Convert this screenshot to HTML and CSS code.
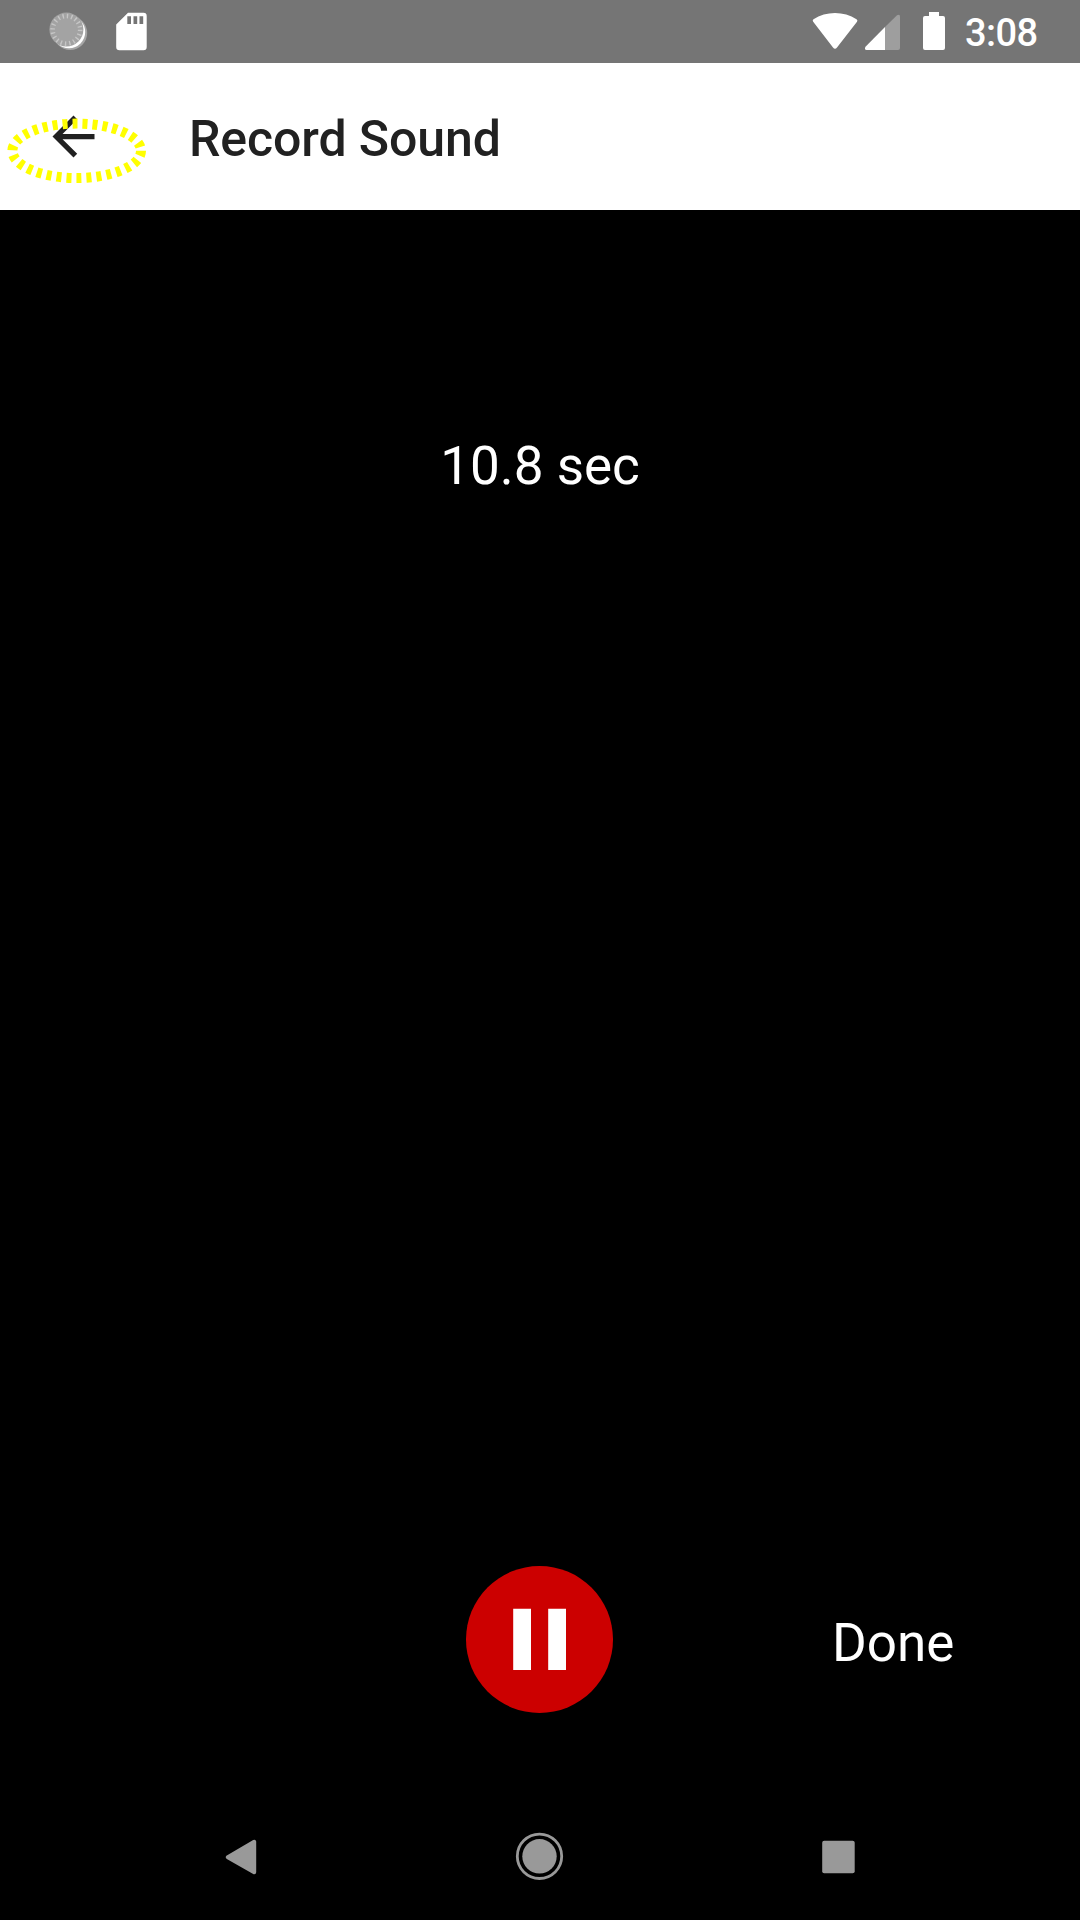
FILE: index.html
```html
<!DOCTYPE html>
<html lang="en">
<head>
<meta charset="utf-8">
<title>Record Sound</title>
<link rel="stylesheet" href="styles.css">
</head>
<body>
<div class="screen">
  <header class="status">
    <svg class="notices" viewBox="0 0 160 63" width="160" height="63">
      <circle cx="70.2" cy="33" r="17" fill="#a6a6a6"/>
      <circle cx="69" cy="32" r="16.2" fill="#fff"/>
      <circle cx="66.4" cy="29.6" r="17" fill="#a3a3a3"/>
      <circle cx="66.4" cy="29.8" r="13.8" fill="none" stroke="#c6c6c6" stroke-width="4.6" stroke-dasharray="1.4 2.935"/>
      <path fill="#fff" fill-rule="evenodd" d="M128 12.7H143.500Q146.700 12.700 146.700 16V47Q146.700 50.300 143.500 50.300H119.500Q116.200 50.300 116.200 47V24.500ZM127.300 16.300V24H131V16.300ZM133.500 16.300V24H137.200V16.300ZM139.500 16.300V24H143.200V16.300Z"/>
    </svg>
    <svg class="signals" viewBox="800 0 150 63" width="150" height="63">
      <path fill="#fff" d="M813 21.500Q812.200 20.300 813.500 19.300C826 10.800 844 10.800 856.500 19.300Q858 20.300 857 21.700L837 47.500Q835 50 833 47.500Z"/>
      <path fill="#9e9e9e" d="M885 27L897 15.300Q900 13.500 900 16.500V48Q900 50 898 50H885Z"/>
      <path fill="#fff" d="M885 27V50H866.500Q864 49.500 865.500 46.700Z"/>
      <path fill="#fff" d="M929 12H939V16H943Q945 16 945 18V48Q945 50 943 50H925Q923 50 923 48V18Q923 16 925 16H929Z"/>
    </svg>
    <span class="clock">3:08</span>
  </header>
  <div class="appbar">
    <svg class="back" viewBox="0 0 24 24" width="63" height="63"><path fill="#212121" d="M20 11H7.830l5.590-5.590L12 4l-8 8 8 8 1.410-1.410L7.830 13H20z"/></svg>
    <h1 class="title">Record Sound</h1>
    <svg class="highlight" viewBox="0 0 160 80" width="160" height="80"><ellipse cx="76.700" cy="40.800" rx="64.300" ry="27.200"/></svg>
  </div>
  <main class="recorder">
    <div class="time">10.8 sec</div>
    <div class="controls">
      <button class="pause" aria-label="Pause">
        <svg viewBox="0 0 147 147" width="147" height="147"><circle cx="73.500" cy="73.500" r="73.500" fill="#c00"/><path fill="#fff" d="M47.200 42.700H65V104H47.200ZM82.200 42.700H100V104H82.200Z"/></svg>
      </button>
      <button class="done">Done</button>
    </div>
  </main>
  <nav class="nav">
    <svg viewBox="0 0 60 70" width="60" height="70"><path fill="#999" stroke="#999" stroke-width="4" stroke-linejoin="round" d="M17.800 37.200L44.200 21.800V52.300Z"/></svg>
    <svg viewBox="0 0 60 70" width="60" height="70"><circle cx="29.500" cy="36.300" r="22.200" fill="none" stroke="#999" stroke-width="2.800"/><circle cx="29.500" cy="36.300" r="17.200" fill="#999"/></svg>
    <svg viewBox="0 0 60 70" width="60" height="70"><rect x="12.200" y="20.700" width="32.500" height="32.500" rx="2" fill="#999"/></svg>
  </nav>
</div>
</body>
</html>
```
FILE: styles.css
```css
* { box-sizing: border-box; }
body { margin: 0; background: #000; font-family: Roboto, "Liberation Sans", sans-serif; }
.screen { width: 1080px; height: 1920px; display: flex; flex-direction: column; overflow: hidden; }
svg { display: block; flex: none; }
.status { height: 63px; background: #757575; display: flex; align-items: center; }
.signals { margin-left: auto; }
.clock { width: 130px; padding: 3px 0 0 15px; color: #fff; font-size: 38px; font-weight: 500; line-height: 44px; letter-spacing: -0.6px; }
.appbar { position: relative; height: 147px; background: #fff; display: flex; align-items: center; padding-left: 42px; }
.title { margin: 0 0 0 84px; color: #212121; font-size: 50px; font-weight: 500; line-height: 60px; padding-top: 5px; letter-spacing: -0.1px; }
.highlight { position: absolute; left: 0; top: 47px; }
.highlight ellipse { fill: none; stroke: #ff0; stroke-width: 10; stroke-dasharray: 5 5; }
.recorder { flex: 1; display: flex; flex-direction: column; justify-content: space-between; color: #fff; font-size: 52.5px; line-height: 62px; }
.time { padding-top: 225px; text-align: center; font-size: 53px; }
.controls { display: grid; grid-template-columns: 466px 147px 1fr; align-items: center; margin-bottom: 80px; }
.pause, .done { border: 0; padding: 0; background: none; color: inherit; font: inherit; }
.pause { grid-column: 2; }
.done { padding-left: 219px; padding-top: 7px; text-align: left; font-size: 53px; }
.nav { height: 127px; display: flex; justify-content: space-between; align-items: flex-start; padding: 27px 210px 0; }
```
